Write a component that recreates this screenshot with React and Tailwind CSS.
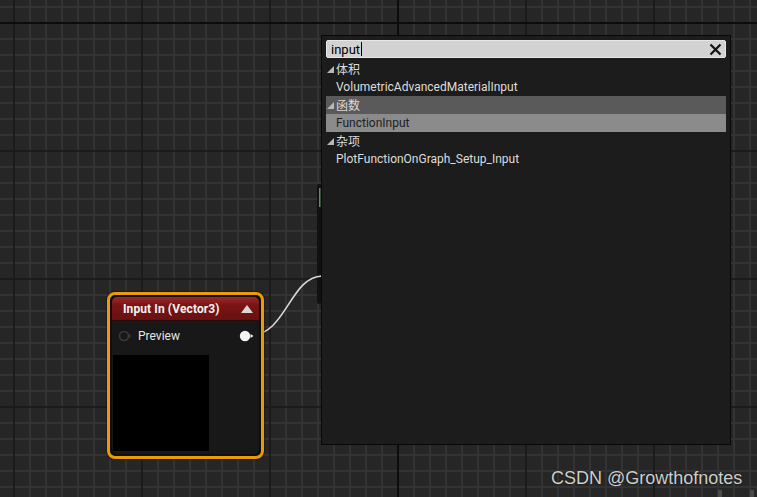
import React from "react";

function Grid() {
  const W = 757, H = 497;
  const minorV = [], minorH = [], majorV = [], majorH = [];
  for (let x = -2; x < W + 16; x += 16) {
    if (((x - 14) % 128 + 128) % 128 === 0) majorV.push(x); else minorV.push(x);
  }
  for (let y = 7; y < H + 16; y += 16) {
    if (((y - 23) % 128 + 128) % 128 === 0) majorH.push(y); else minorH.push(y);
  }
  return (
    <svg className="absolute left-0 top-0" width={W} height={H}>
      <rect x="0" y="0" width={W} height={H} fill="#262626" />
      {minorV.map((x) => (
        <rect key={"mv" + x} x={x - 1} y="0" width="2" height={H} fill="#333333" />
      ))}
      {minorH.map((y) => (
        <rect key={"mh" + y} x="0" y={y - 1} width={W} height="2" fill="#333333" />
      ))}
      {majorV.map((x) => (
        <rect key={"Mv" + x} x={x - 1} y="0" width="2" height={H} fill={x === 398 ? "#0c0c0c" : "#1b1b1b"} />
      ))}
      {majorH.map((y) => (
        <rect key={"Mh" + y} x="0" y={y - 1} width={W} height="2" fill={y === 23 ? "#0c0c0c" : "#1b1b1b"} />
      ))}
      <rect x="317" y="184" width="4" height="120" rx="2" fill="#111111" />
      <rect x="319" y="188" width="1.5" height="19" fill="#5f8f5f" />
      <path d="M251 335 C 286 335, 290 277, 322 276" stroke="#d8d8d8" strokeWidth="1.6" fill="none" />
      <rect x="718" y="490" width="4" height="7" fill="#4a4a4a" />
      <rect x="750" y="490" width="4" height="7" fill="#4a4a4a" />
    </svg>
  );
}

function Tri({ color = "#b8b8b8" }) {
  return (
    <svg width="7" height="7" viewBox="0 0 7 7" className="shrink-0">
      <polygon points="7,0 7,7 0,7" fill={color} />
    </svg>
  );
}

function Node() {
  return (
    <div className="absolute left-[107px] top-[292px] w-[157px] h-[167px] rounded-[8px] border-[3px] border-[#ec9a08] bg-[#0e0e0e] p-[2px] shadow-[0_0_2px_#000]">
      <div className="w-full h-full rounded-[5px] overflow-hidden bg-[#171817] flex flex-col">
        <div className="h-[24px] shrink-0 flex items-center pl-[11px] pr-[5px] bg-[linear-gradient(180deg,#9c2a2a_0%,#7a1414_35%,#6a1010_100%)] border-b border-[#2a0a0a]">
          <span className="text-[12px] font-bold text-[#f2f2f2] font-['Roboto',sans-serif] leading-none tracking-[0.1px]">
            Input In (Vector3)
          </span>
          <svg width="12" height="8" viewBox="0 0 12 8" className="ml-auto mr-[1px]">
            <polygon points="6,0 12,8 0,8" fill="#d8d8d8" />
          </svg>
        </div>
        <div className="h-[30px] shrink-0 flex items-center pl-[6px] pr-[5px]">
          <svg width="14" height="12" viewBox="0 0 14 12">
            <circle cx="6" cy="6" r="4.5" fill="none" stroke="#3a3a3a" strokeWidth="1.6" />
            <polygon points="11,4 13.5,6 11,8" fill="#3a3a3a" />
          </svg>
          <span className="ml-[6px] text-[12px] text-[#e6e6e6] font-['Roboto',sans-serif] leading-none">Preview</span>
          <svg width="15" height="12" viewBox="0 0 15 12" className="ml-auto">
            <circle cx="6" cy="6" r="5.2" fill="#f4f4f4" />
            <polygon points="11.5,4 14.5,6 11.5,8" fill="#f4f4f4" />
          </svg>
        </div>
        <div className="ml-[1px] mt-[4px] w-[96px] h-[96px] bg-black" />
      </div>
    </div>
  );
}

function Row({ children, bg = "", cat = false, text = "text-[#dcdcdc]" }) {
  return (
    <div className={`h-[18px] flex items-center ${bg} ${cat ? "pl-[1px]" : "pl-[10px]"}`}>
      {cat && <Tri />}
      <span className={`${cat ? "ml-[2px] font-['Noto_Sans_CJK_SC',sans-serif]" : "font-['Roboto',sans-serif]"} text-[12px] leading-none ${text}`}>
        {children}
      </span>
    </div>
  );
}

function Popup() {
  return (
    <div className="absolute left-[321px] top-[35px] w-[410px] h-[410px] border border-[#080808] bg-[#1c1c1c] px-[4px] pt-[4px]">
      <div className="h-[18px] rounded-[2px] bg-[#d2d2d2] border border-[#e6e6e6] flex items-center pl-[4px] pr-[3px]">
        <span className="text-[13px] text-black font-['Roboto',sans-serif] leading-none">input</span>
        <span className="w-[1px] h-[14px] bg-black ml-[0.5px]" />
        <svg width="13" height="13" viewBox="0 0 13 13" className="ml-auto">
          <path d="M1.5 1.5 L11.5 11.5 M11.5 1.5 L1.5 11.5" stroke="#111" strokeWidth="2.2" />
        </svg>
      </div>
      <div className="mt-[2px] flex flex-col">
        <Row cat>体积</Row>
        <Row>VolumetricAdvancedMaterialInput</Row>
        <Row cat bg="bg-[#5a5a5a]">函数</Row>
        <Row bg="bg-[#8b8b8b]" text="text-[#1e1e1e]">FunctionInput</Row>
        <Row cat>杂项</Row>
        <Row>PlotFunctionOnGraph_Setup_Input</Row>
      </div>
    </div>
  );
}

export default function App() {
  return (
    <div className="relative w-[757px] h-[497px] overflow-hidden bg-[#262626]">
      <Grid />
      <Node />
      <Popup />
      <div className="absolute left-[551px] top-[469px] text-[18px] leading-none text-[#cfcfcf] font-['Liberation_Sans',Arial,sans-serif] [text-shadow:0_0_1px_#000]">
        CSDN @Growthofnotes
      </div>
    </div>
  );
}
